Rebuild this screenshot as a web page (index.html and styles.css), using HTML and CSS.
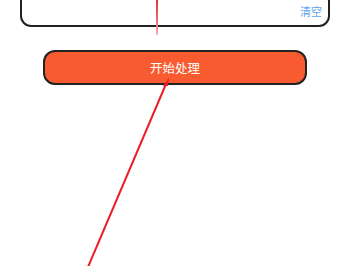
FILE: index.html
```html
<!DOCTYPE html>
<html lang="zh">
<head>
<meta charset="utf-8">
<link rel="stylesheet" href="styles.css">
</head>
<body>
<div class="page">
  <div class="input-box">
    <span class="clear">清空</span>
  </div>
  <button class="start-btn">开始处理</button>
</div>
<svg class="overlay" width="350" height="266" viewBox="0 0 350 266">
  <defs>
    <linearGradient id="vfade" x1="0" y1="0" x2="0" y2="1">
      <stop offset="0" stop-color="#e8323c"/>
      <stop offset="0.7" stop-color="#f07a82"/>
      <stop offset="1" stop-color="#f6b0b4"/>
    </linearGradient>
  </defs>
  <rect x="156" y="0" width="2" height="35" fill="url(#vfade)"/>
  <line x1="88" y1="267" x2="166" y2="84" stroke="#ee1c25" stroke-width="2"/>
  <polygon points="169,78 163,86 168,86" fill="#ee1c25"/>
</svg>
</body>
</html>
```

FILE: styles.css
```css
html, body {
  margin: 0;
  padding: 0;
  background: #ffffff;
  font-family: "Noto Sans CJK SC", "Noto Sans", sans-serif;
  overflow: hidden;
}

.page {
  display: flex;
  flex-direction: column;
  width: 350px;
  height: 266px;
}

.input-box {
  box-sizing: border-box;
  margin: -40px 20px 0 20px;
  height: 67px;
  border: 2px solid #222222;
  border-radius: 11px;
  display: flex;
  align-items: flex-end;
  justify-content: flex-end;
  padding: 0 6px 7px 0;
  background: #fff;
}

.clear {
  color: #5ea3ee;
  font-size: 11px;
  line-height: 13px;
}

.start-btn {
  box-sizing: border-box;
  margin: 23px 43px 0 43px;
  height: 35px;
  border: 2px solid #222222;
  border-radius: 12px;
  background: #f85b2f;
  color: #ffffff;
  font-family: "Noto Sans CJK SC", "Noto Sans", sans-serif;
  font-size: 12.5px;
  padding: 0;
  display: flex;
  align-items: center;
  justify-content: center;
}

.overlay {
  position: absolute;
  left: 0;
  top: 0;
  pointer-events: none;
}
```
